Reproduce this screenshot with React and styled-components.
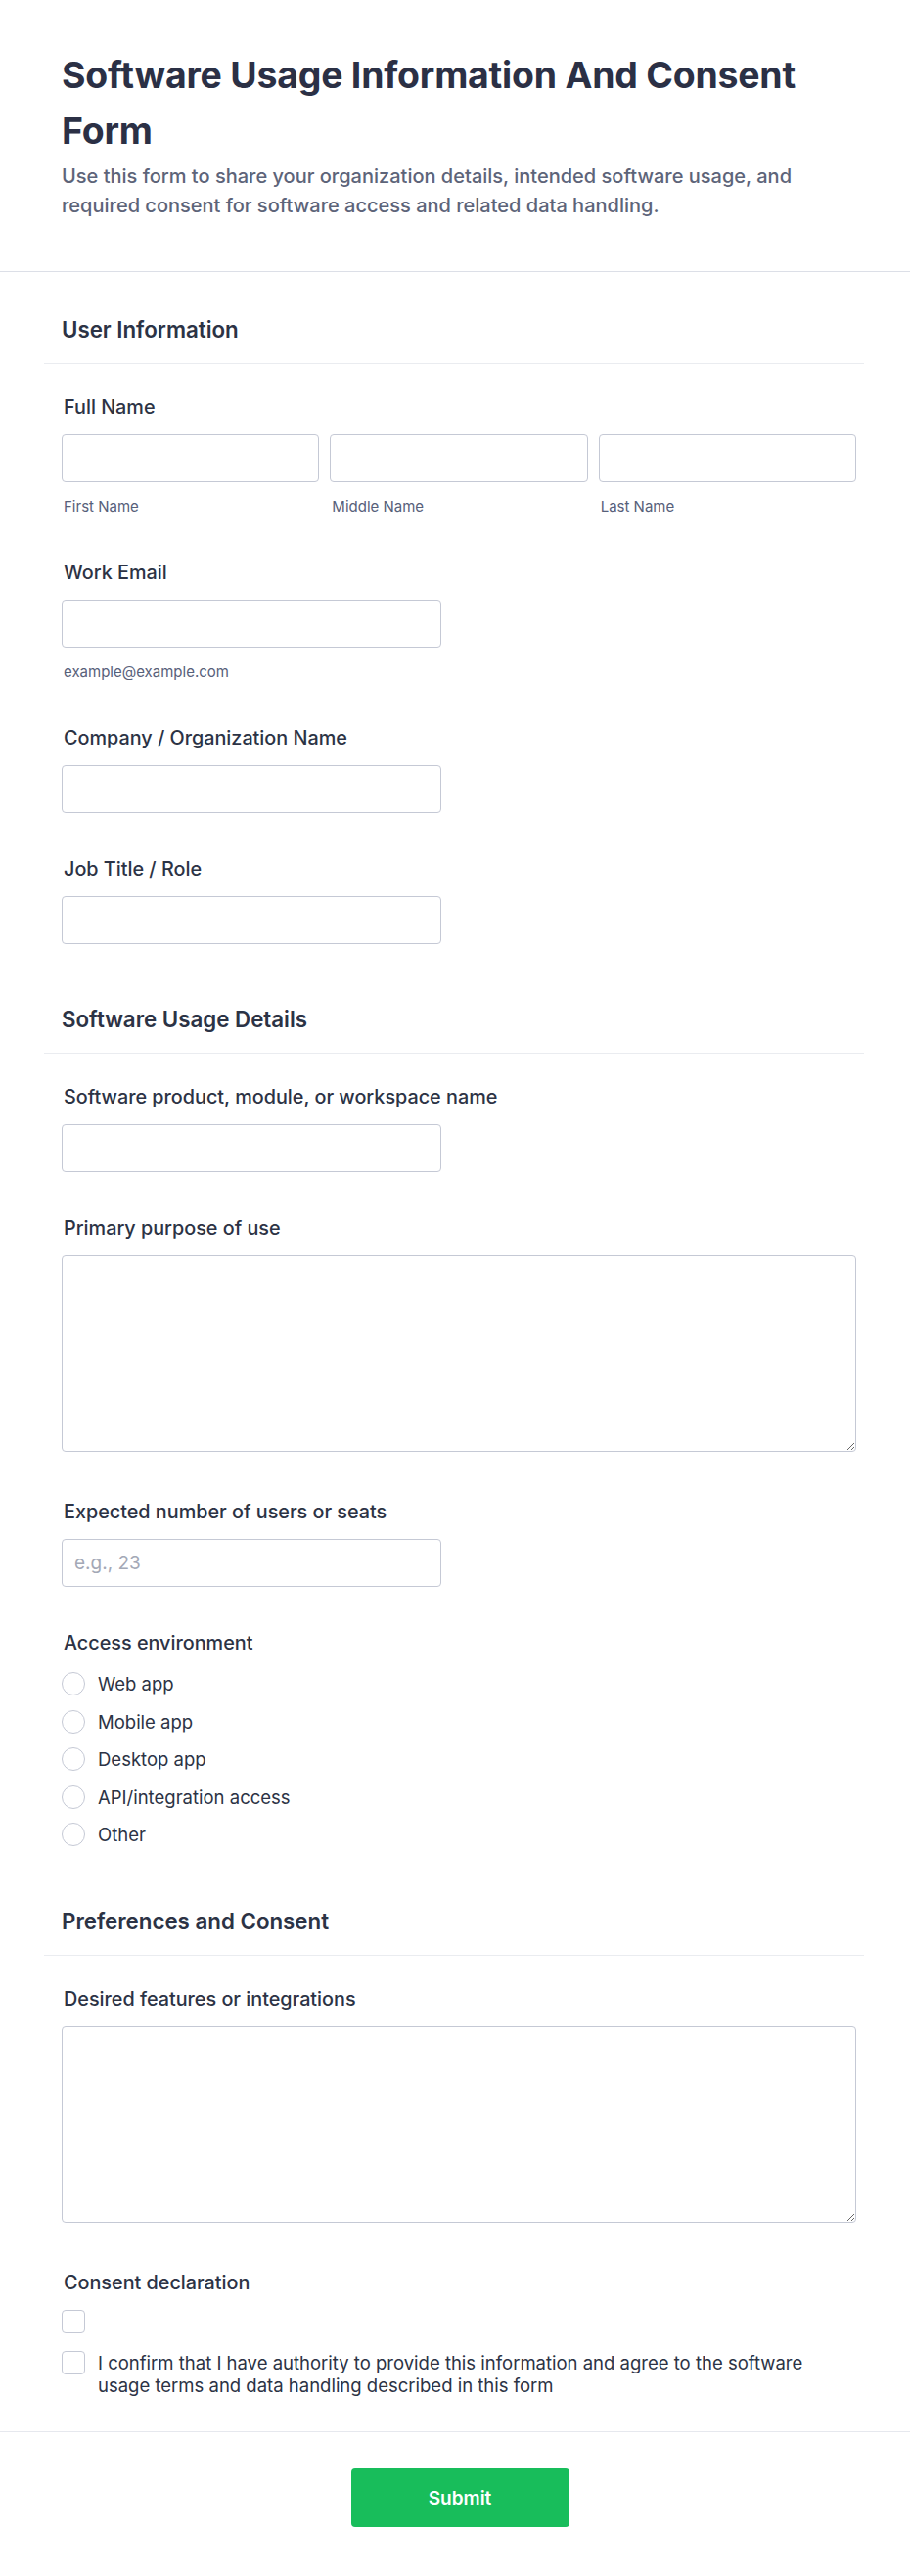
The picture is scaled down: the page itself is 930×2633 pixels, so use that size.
import React from "react";
import styled, { createGlobalStyle } from "styled-components";

const GlobalStyle = createGlobalStyle`
  * { box-sizing: border-box; }
  html, body { margin: 0; padding: 0; background: #ffffff; }
  body {
    font-family: Inter, "Noto Sans", "Liberation Sans", sans-serif;
    color: #2c3345;
    -webkit-font-smoothing: antialiased;
  }
`;

const Page = styled.div`
  width: 100%;
  background: #ffffff;
`;

const Header = styled.header`
  border-bottom: 1px solid #dcdfe7;
  padding: 48px 0 52px;
`;

const Inner = styled.div`
  margin-left: 45px;
  width: 838px;
  padding: 0 8px 0 18px;
`;

const Title = styled.h1`
  margin: 0;
  font-size: 37.4px;
  line-height: 57px;
  font-weight: 700;
  color: #2b3045;
  letter-spacing: -0.2px;
`;

const Description = styled.p`
  margin: 3px 0 0;
  font-size: 20px;
  line-height: 30px;
  font-weight: 500;
  color: #5d6479;
`;

const Form = styled.form`
  padding: 45px 0 36px;
  display: flex;
  flex-direction: column;
  gap: 63px;
`;

const Section = styled.section`
  margin-left: 45px;
  width: 838px;
`;

const SectionHead = styled.div`
  padding: 0 8px 20px 18px;
  border-bottom: 1px solid #eaecf0;
`;

const SectionTitle = styled.h2`
  margin: 0;
  font-size: 22.3px;
  line-height: 28px;
  font-weight: 600;
  color: #2c3345;
`;

const SectionBody = styled.div`
  padding: 32px 8px 0 18px;
  display: flex;
  flex-direction: column;
  gap: 45px;
`;

const Field = styled.div`
  display: flex;
  flex-direction: column;
`;

const Label = styled.label`
  display: block;
  padding-left: 2px;
  margin-bottom: 16px;
  font-size: 19.8px;
  line-height: 24px;
  font-weight: 500;
  color: #2c3345;
`;

const NameRow = styled.div`
  display: grid;
  grid-template-columns: repeat(3, 1fr);
  gap: 11px;
`;

const Stack = styled.div`
  display: flex;
  flex-direction: column;
`;

const TextInput = styled.input`
  display: block;
  width: ${(p) => (p.$full ? "100%" : "388px")};
  height: 49px;
  padding: 0 12px;
  border: 1px solid #c5c9d5;
  border-radius: 4px;
  background: #ffffff;
  font-family: inherit;
  font-size: 19px;
  color: #2c3345;
  outline: none;
  &::placeholder { color: #a3a8b6; }
`;

const TextArea = styled.textarea`
  display: block;
  width: 100%;
  height: 201px;
  margin-bottom: 4px;
  padding: 10px 12px;
  border: 1px solid #c5c9d5;
  border-radius: 4px;
  background: #ffffff;
  font-family: inherit;
  font-size: 19px;
  outline: none;
  resize: vertical;
`;

const SubLabel = styled.span`
  display: block;
  margin-top: 15px;
  padding-left: 2px;
  font-size: 15px;
  line-height: 20px;
  color: #57607a;
`;

const OptionList = styled.div`
  display: flex;
  flex-direction: column;
  gap: 14.5px;
  margin-top: 2px;
`;

const Option = styled.label`
  display: flex;
  align-items: ${(p) => (p.$top ? "flex-start" : "center")};
  gap: 13px;
  min-height: 24px;
  font-size: 18.5px;
  line-height: ${(p) => (p.$top ? "22.5px" : "24px")};
  color: #2c3345;
`;

const Radio = styled.input.attrs({ type: "radio" })`
  appearance: none;
  -webkit-appearance: none;
  flex: none;
  margin: 0;
  width: 24px;
  height: 24px;
  border: 1px solid #c5c9d5;
  border-radius: 50%;
  background: #ffffff;
`;

const Check = styled.input.attrs({ type: "checkbox" })`
  appearance: none;
  -webkit-appearance: none;
  flex: none;
  margin: 0;
  width: 24px;
  height: 24px;
  border: 1px solid #c5c9d5;
  border-radius: 4px;
  background: #ffffff;
`;

const CheckList = styled.div`
  display: flex;
  flex-direction: column;
  gap: 18px;
`;

const ConsentText = styled.span`
  padding-top: 1px;
`;

const Footer = styled.footer`
  border-top: 1px solid #e6e8ee;
  padding: 37px 0 50px;
`;

const FooterInner = styled(Inner)`
  display: flex;
  justify-content: center;
`;

const SubmitButton = styled.button`
  width: 223px;
  height: 60px;
  margin-left: 2px;
  border: none;
  border-radius: 4px;
  background: #18bd5b;
  color: #ffffff;
  font-family: inherit;
  font-size: 19px;
  font-weight: 600;
  cursor: pointer;
`;

const environments = [
  "Web app",
  "Mobile app",
  "Desktop app",
  "API/integration access",
  "Other",
];

export default function App() {
  return (
    <Page>
      <GlobalStyle />
      <Header>
        <Inner>
          <Title>Software Usage Information And Consent Form</Title>
          <Description>
            Use this form to share your organization details, intended software
            usage, and required consent for software access and related data
            handling.
          </Description>
        </Inner>
      </Header>

      <Form onSubmit={(e) => e.preventDefault()}>
        <Section>
          <SectionHead>
            <SectionTitle>User Information</SectionTitle>
          </SectionHead>
          <SectionBody>
            <Field>
              <Label>Full Name</Label>
              <NameRow>
                <Stack>
                  <TextInput $full />
                  <SubLabel>First Name</SubLabel>
                </Stack>
                <Stack>
                  <TextInput $full />
                  <SubLabel>Middle Name</SubLabel>
                </Stack>
                <Stack>
                  <TextInput $full />
                  <SubLabel>Last Name</SubLabel>
                </Stack>
              </NameRow>
            </Field>
            <Field>
              <Label>Work Email</Label>
              <TextInput type="email" />
              <SubLabel>example@example.com</SubLabel>
            </Field>
            <Field>
              <Label>Company / Organization Name</Label>
              <TextInput />
            </Field>
            <Field>
              <Label>Job Title / Role</Label>
              <TextInput />
            </Field>
          </SectionBody>
        </Section>

        <Section>
          <SectionHead>
            <SectionTitle>Software Usage Details</SectionTitle>
          </SectionHead>
          <SectionBody>
            <Field>
              <Label>Software product, module, or workspace name</Label>
              <TextInput />
            </Field>
            <Field>
              <Label>Primary purpose of use</Label>
              <TextArea />
            </Field>
            <Field>
              <Label>Expected number of users or seats</Label>
              <TextInput type="text" placeholder="e.g., 23" />
            </Field>
            <Field>
              <Label>Access environment</Label>
              <OptionList>
                {environments.map((env) => (
                  <Option key={env}>
                    <Radio name="environment" value={env} />
                    <span>{env}</span>
                  </Option>
                ))}
              </OptionList>
            </Field>
          </SectionBody>
        </Section>

        <Section>
          <SectionHead>
            <SectionTitle>Preferences and Consent</SectionTitle>
          </SectionHead>
          <SectionBody>
            <Field>
              <Label>Desired features or integrations</Label>
              <TextArea />
            </Field>
            <Field>
              <Label>Consent declaration</Label>
              <CheckList>
                <Option>
                  <Check />
                </Option>
                <Option $top>
                  <Check />
                  <ConsentText>
                    I confirm that I have authority to provide this information
                    and agree to the software usage terms and data handling
                    described in this form
                  </ConsentText>
                </Option>
              </CheckList>
            </Field>
          </SectionBody>
        </Section>
      </Form>

      <Footer>
        <FooterInner>
          <SubmitButton type="submit">Submit</SubmitButton>
        </FooterInner>
      </Footer>
    </Page>
  );
}
